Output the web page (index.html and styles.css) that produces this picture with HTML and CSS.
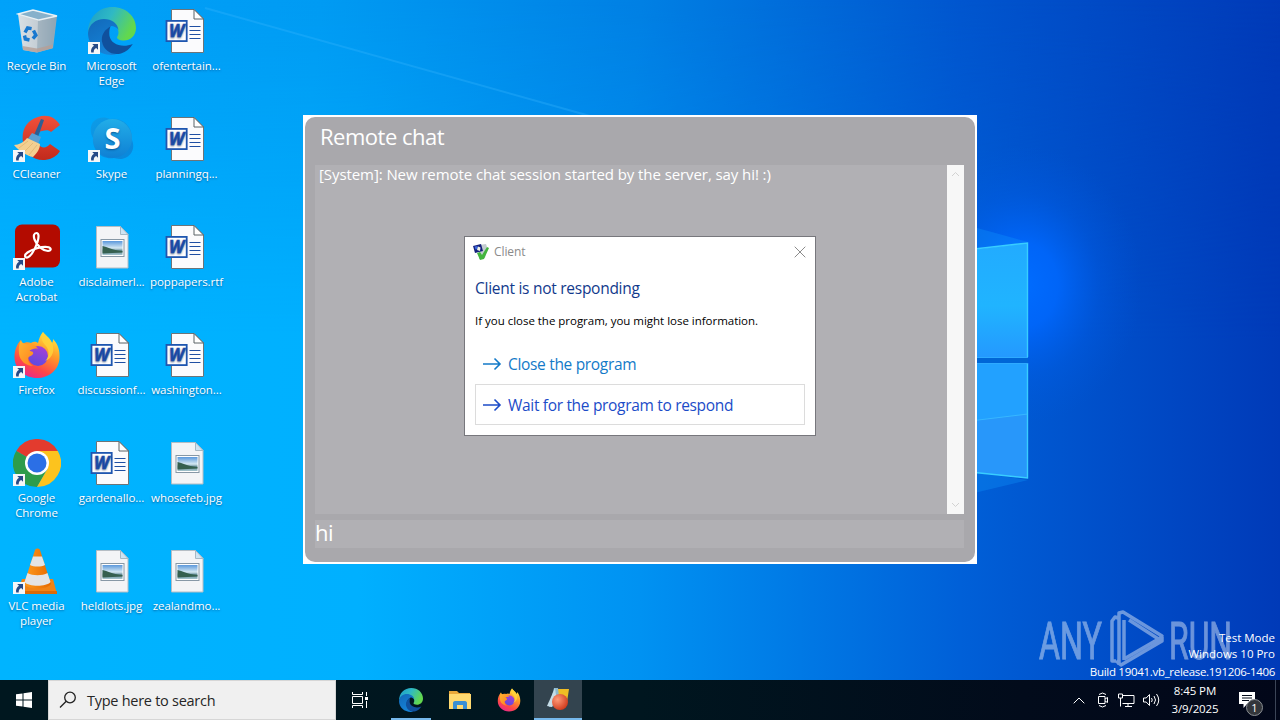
FILE: index.html
```html
<!DOCTYPE html>
<html lang="en">

<head>
    <meta charset="UTF-8" />
    <meta name="viewport" content="width=device-width, initial-scale=1.0" />
    <title>Desktop</title>
    <link rel="stylesheet" href="styles.css">
</head>

<body>
    <!-- Shared icons -->
    <svg class="sprite" aria-hidden="true">
        <defs>
            <linearGradient id="gEdgeTop" x1="0" y1="0" x2="1" y2="0.4">
                <stop offset="0" stop-color="#1b9bc9" />
                <stop offset="0.5" stop-color="#2fb9c4" />
                <stop offset="1" stop-color="#62d84e" />
            </linearGradient>
            <linearGradient id="gEdgeLow" x1="0" y1="0" x2="0.5" y2="1">
                <stop offset="0" stop-color="#1268b8" />
                <stop offset="1" stop-color="#1583d8" />
            </linearGradient>
            <linearGradient id="gFox" x1="0.8" y1="0" x2="0.3" y2="1">
                <stop offset="0" stop-color="#fff044" />
                <stop offset="0.4" stop-color="#ff9a28" />
                <stop offset="0.75" stop-color="#ff4747" />
                <stop offset="1" stop-color="#e8288c" />
            </linearGradient>
            <linearGradient id="gFoxHead" x1="0" y1="0" x2="1" y2="1">
                <stop offset="0" stop-color="#ffb82e" />
                <stop offset="1" stop-color="#ff7a22" />
            </linearGradient>
            <linearGradient id="gGlobe" x1="0.7" y1="0" x2="0.3" y2="1">
                <stop offset="0" stop-color="#a73fd5" />
                <stop offset="1" stop-color="#5b4be0" />
            </linearGradient>
            <linearGradient id="gSkype" x1="0" y1="0" x2="0.5" y2="1">
                <stop offset="0" stop-color="#1298e0" />
                <stop offset="1" stop-color="#0f7ccf" />
            </linearGradient>
            <linearGradient id="gSkypeFront" x1="0" y1="0" x2="0" y2="1">
                <stop offset="0" stop-color="#22ade8" />
                <stop offset="1" stop-color="#0f80d4" />
            </linearGradient>
            <linearGradient id="gCc" x1="0" y1="0" x2="0" y2="1">
                <stop offset="0" stop-color="#f0503a" />
                <stop offset="1" stop-color="#c22a1c" />
            </linearGradient>
            <linearGradient id="gCone" x1="0" y1="0" x2="1" y2="0">
                <stop offset="0" stop-color="#ff9a1c" />
                <stop offset="1" stop-color="#e66a00" />
            </linearGradient>
            <linearGradient id="gBin" x1="0" y1="0" x2="1" y2="0">
                <stop offset="0" stop-color="#d9e0e5" />
                <stop offset="0.55" stop-color="#c3ccd3" />
                <stop offset="1" stop-color="#8fa6b6" />
            </linearGradient>
            <linearGradient id="gPhoto" x1="0" y1="0" x2="0" y2="1">
                <stop offset="0" stop-color="#5b98dc" />
                <stop offset="0.5" stop-color="#d4e8f2" />
                <stop offset="0.7" stop-color="#5d8794" />
                <stop offset="1" stop-color="#a6c6cf" />
            </linearGradient>
            <radialGradient id="gBall" cx="0.35" cy="0.35" r="0.7">
                <stop offset="0" stop-color="#ff9a78" />
                <stop offset="1" stop-color="#cf3a1c" />
            </radialGradient>
        </defs>

        <symbol id="shortcut" viewBox="0 0 12 12">
            <path d="M0 0h12v12H0z" fill="#f4f6f8" />
            <path d="M4.200 2H10v5.800L8.200 6C6.300 7 5.600 8.400 5.700 10.500H3.200C2.600 7.800 3.600 5.400 6 3.800z" fill="#274a86" />
        </symbol>

        <symbol id="bin" viewBox="0 0 48 48">
            <path d="M5 7l15-4 24 6-4 32-16 4.500L10 43z" fill="url(#gBin)" />
            <path d="M25 13l18.500-4-4 32-15.500 4z" fill="#8da4b2" opacity=".6" />
            <path d="M5 7l15-4 24 6-18 4z" fill="#86b1cb" stroke="#e9f1f5" stroke-width="1.300" />
            <path d="M9.500 39l14.500 2.500 16-4-.5 4L24 45.500 10 43z" fill="#b59f96" opacity=".8" />
            <g fill="none" stroke="#1878cf" stroke-width="3.400">
                <path d="M12 25.500l2.600-4.500 4 .7" />
                <path d="M20.500 23.500l2.400 4.700-3 3.500" />
                <path d="M16.500 33l-4.200-1-.8-3.500" />
            </g>
        </symbol>

        <symbol id="edge" viewBox="0 0 48 48">
            <path d="M0 26C0 10 11 0 24.500 0 38 0 48 9.500 48 21c0 8-6 12.500-12 12.500-4.500 0-7-1.500-7-3 0-1 1.500-2 1.500-5C30.500 19 24 14 16 14 8 14 2 19 0 26z" fill="url(#gEdgeTop)" />
            <path d="M0 26c1-9 8-14 16-14 7.500 0 14 4.500 14.500 11-2-3-5-4-7-4-5 2-8 7-8 13 0 8 6 14 13 15.500C13 50 0 40 0 26z" fill="url(#gEdgeLow)" />
            <path d="M22.500 19.500c-6 3-9.500 9-8.500 15 1.500 9 10 14.500 19 12 5-1.500 9-5 11.800-9.500-11 4.500-22 0-23.300-8-.5-4 0-7.500 1-9.500z" fill="#10509d" />
        </symbol>

        <symbol id="ccleaner" viewBox="0 0 48 48">
            <path d="M47 10C42 2 34-1 25 2 14 5 8 15 10 27c2 12 11 19 22 18 7-1 12-4 15-9l-10-7c-4 5-9 4-12 0-3-6-1-12 4-13 4-1 7-1 9 1z" fill="url(#gCc)" />
            <path d="M28 4l3 1-6 17-4-2z" fill="#2c5f94" />
            <path d="M19 18l9 4-3 7-11-4z" fill="#5a9fd2" />
            <path d="M14 23l13 6c0 5-3 9-7 13-6-1-14-6-19-12 5 0 10-3 13-7z" fill="#f3cf91" />
            <path d="M6 33l9-7M11 37l9-9M16 40l8-10" stroke="#e5bb76" />
        </symbol>

        <symbol id="skype" viewBox="0 0 48 48">
            <path d="M5 7C10 1 18 2 22 4c13-2 23 8 22 21 4 9-2 19-12 19-3 0-5-1-6-1C13 45 4 35 5 23 2 18 2 11 5 7z" fill="url(#gSkype)" opacity=".7" />
            <circle cx="24.500" cy="23.500" r="19.500" fill="url(#gSkypeFront)" />
            <text x="24.500" y="34" class="skype-letter">S</text>
        </symbol>

        <symbol id="acrobat" viewBox="0 0 48 48">
            <rect x="2" y="1.500" width="45" height="43" rx="7" fill="#b30b00" />
            <path d="M23.500 10c2.500 0 2.500 4 1 9-2.500 7-6.500 14-10 15.500-3 .5-3.500-2.500 0-5 5-3.500 14-6 19.500-5.500 5 .5 4.500 4 1 4-5 0-11-5-13.500-11.500-1.300-4-.5-6.500 2-6.500z" fill="none" stroke="#fff" stroke-width="2.200" />
        </symbol>

        <symbol id="firefox" viewBox="0 0 48 48">
            <path d="M30 1c2 3 7 6 9 11 1-1 1-3 1-4 5 5 7 12 6.500 19C46 39 36 47 24 47S1.500 38 1.500 26C1.500 19 4 13 8 9c0 2 .5 3 1 4 3-2 7-2 9-1 4-2 5-1 7 0 1-4 2-8 5-11z" fill="url(#gFox)" />
            <circle cx="25" cy="25" r="10" fill="url(#gGlobe)" />
            <path d="M8 9c1 4 5 5 10 4 3 1 5 2 7 5-3-1-6 0-9 2 3 0 5 1 4 3-1 2-4 2-5 4 0 4 2 6 5 8-7 0-13-5-14-12-.5-6 0-10 2-14z" fill="url(#gFoxHead)" />
            <path d="M30 1c-3 5-1 10 3 14 4 5 3 12-1 15 8-3 10-11 7-18-2-5-7-8-9-11z" fill="#ffd23a" opacity=".85" />
        </symbol>

        <symbol id="chrome" viewBox="0 0 48 48">
            <path d="M24 24L3.200 12A24 24 0 0 1 44.800 12z" fill="#e33b2e" />
            <path d="M24 24L3.200 12A24 24 0 0 0 24 48l10.400-18z" fill="#2d9c4b" />
            <path d="M24 12h20.800A24 24 0 0 1 24 48l10.400-18z" fill="#fcc31e" />
            <circle cx="24" cy="24" r="12" fill="#fff" />
            <circle cx="24" cy="24" r="9.500" fill="#2b6fe6" />
        </symbol>

        <symbol id="vlc" viewBox="0 0 48 48">
            <path d="M9 32h31l4 15H4z" fill="#f08316" />
            <path d="M4 44h40v3H4z" fill="#d96a08" />
            <path d="M22 3c1-2 4-2 5 0l11 34c-4 6-23 6-27 0z" fill="url(#gCone)" />
            <path d="M20 9.500h9l3 8.500c-4 2-11 2-15 0z" fill="#e4e4e4" />
            <path d="M14.500 26c5 3 15 3 20 0l3 9c-4 5-22 5-26 0z" fill="#e4e4e4" />
        </symbol>

        <symbol id="word" viewBox="0 0 48 48">
            <path d="M8.500 2.500h22.500L40.500 12v33.500h-32z" fill="#fbfbfd" stroke="#6d7478" />
            <path d="M31 2.500V12h9.500z" fill="#fff" stroke="#5b6266" />
            <path d="M26.500 19.500h11M26.500 23.500h11M26.500 27.500h11M26.500 31.500h11" stroke="#1f4fa3" />
            <rect x="3.500" y="13.900" width="20.200" height="20.200" fill="#fff" stroke="#1e56b0" stroke-width="1.800" />
            <text x="13.500" y="30" class="word-letter">W</text>
        </symbol>

        <symbol id="photo" viewBox="0 0 48 48">
            <path d="M8.500 3.500h24l7.500 8v33.500h-31.500z" fill="#f3f4f6" stroke="#b5bdc4" />
            <path d="M32.500 3.500v8H40z" fill="#cfe4f2" stroke="#a6b8c4" />
            <rect x="13" y="16.500" width="23" height="17" fill="#fff" stroke="#8798a6" />
            <rect x="14.500" y="18" width="20" height="14" fill="url(#gPhoto)" />
            <path d="M14.500 23c5 1 9 4 20 5v1.500l-20 1z" fill="#35604f" />
        </symbol>

        <symbol id="arrow" viewBox="0 0 20 14">
            <path d="M1 7h17M12.500 1.500L18 7l-5.500 5.500" fill="none" stroke="currentColor" stroke-width="1.600" />
        </symbol>
    </svg>

    <div class="desktop">
        <!-- Wallpaper -->
        <svg class="wallpaper" viewBox="0 0 1280 680" aria-hidden="true">
            <defs>
                <linearGradient id="sky" x1="0" y1="0" x2="1" y2="0.050">
                    <stop offset="0" stop-color="#00a2fa" />
                    <stop offset="0.25" stop-color="#009bf3" />
                    <stop offset="0.5" stop-color="#0080e4" />
                    <stop offset="0.75" stop-color="#0056cf" />
                    <stop offset="1" stop-color="#003ab8" />
                </linearGradient>
                <linearGradient id="floor" x1="0" y1="0" x2="1" y2="0">
                    <stop offset="0" stop-color="#00b4ff" />
                    <stop offset="0.28" stop-color="#00b0ff" />
                    <stop offset="0.5" stop-color="#0092f2" />
                    <stop offset="0.75" stop-color="#0060d8" />
                    <stop offset="1" stop-color="#003ab8" />
                </linearGradient>
                <linearGradient id="fade" x1="0" y1="0" x2="0" y2="1">
                    <stop offset="0" stop-color="#000" />
                    <stop offset="0.5" stop-color="#fff" />
                </linearGradient>
                <mask id="fadeMask">
                    <rect width="1280" height="680" fill="url(#fade)" />
                </mask>
                <radialGradient id="glow">
                    <stop offset="0" stop-color="#006cff" />
                    <stop offset="0.3" stop-color="#0068ff" stop-opacity=".85" />
                    <stop offset="0.65" stop-color="#0060f0" stop-opacity=".3" />
                    <stop offset="1" stop-color="#005ae0" stop-opacity="0" />
                </radialGradient>
                <linearGradient id="paneTop" x1="0" y1="0" x2="0" y2="1">
                    <stop offset="0" stop-color="#22abff" />
                    <stop offset="0.55" stop-color="#20b4ff" />
                    <stop offset="1" stop-color="#2499ff" />
                </linearGradient>
            </defs>
            <rect width="1280" height="680" fill="url(#sky)" />
            <rect width="1280" height="680" fill="url(#floor)" mask="url(#fadeMask)" />
            <ellipse cx="1022" cy="285" rx="120" ry="140" fill="url(#glow)" />
            <path d="M205 8L590 116" stroke="#3cb8ff" stroke-width="2" opacity=".3" />
            <path d="M970 226l58 16-58 8zM970 494l58-14-58-8z" fill="#109bff" opacity=".3" />
            <path d="M970 250l58-7v114h-58z" fill="url(#paneTop)" />
            <path d="M970 363h58v115l-58-6z" fill="#22a1ff" />
            <path d="M970 421l58-7v64l-58-6z" fill="#2897fa" />
            <path d="M970 421l58-7" stroke="#37b7ff" />
            <path d="M970 249.500l57.500-6.500v114M1027.500 363v115l-57.500-6" fill="none" stroke="#38ceff" stroke-width="1.400" />
            <path d="M970 357.500h58M970 363.500h58" stroke="#2eaaff" />
            <path d="M970 360.500h58" stroke="#0066d6" stroke-width="5" />
        </svg>

        <!-- Desktop icons -->
        <div class="icons">
            <div class="item"><svg class="icon"><use href="#bin" /></svg><span>Recycle Bin</span></div>
            <div class="item"><svg class="icon"><use href="#ccleaner" /></svg><svg class="link"><use href="#shortcut" /></svg><span>CCleaner</span></div>
            <div class="item"><svg class="icon"><use href="#acrobat" /></svg><svg class="link"><use href="#shortcut" /></svg><span>Adobe<br />Acrobat</span></div>
            <div class="item"><svg class="icon"><use href="#firefox" /></svg><svg class="link"><use href="#shortcut" /></svg><span>Firefox</span></div>
            <div class="item"><svg class="icon"><use href="#chrome" /></svg><svg class="link"><use href="#shortcut" /></svg><span>Google<br />Chrome</span></div>
            <div class="item"><svg class="icon"><use href="#vlc" /></svg><svg class="link"><use href="#shortcut" /></svg><span>VLC media<br />player</span></div>

            <div class="item"><svg class="icon"><use href="#edge" /></svg><svg class="link"><use href="#shortcut" /></svg><span>Microsoft<br />Edge</span></div>
            <div class="item"><svg class="icon"><use href="#skype" /></svg><svg class="link"><use href="#shortcut" /></svg><span>Skype</span></div>
            <div class="item"><svg class="icon"><use href="#photo" /></svg><span>disclaimerl...</span></div>
            <div class="item"><svg class="icon"><use href="#word" /></svg><span>discussionf...</span></div>
            <div class="item"><svg class="icon"><use href="#word" /></svg><span>gardenallo...</span></div>
            <div class="item"><svg class="icon"><use href="#photo" /></svg><span>heldlots.jpg</span></div>

            <div class="item"><svg class="icon"><use href="#word" /></svg><span>ofentertain...</span></div>
            <div class="item"><svg class="icon"><use href="#word" /></svg><span>planningq...</span></div>
            <div class="item"><svg class="icon"><use href="#word" /></svg><span>poppapers.rtf</span></div>
            <div class="item"><svg class="icon"><use href="#word" /></svg><span>washington...</span></div>
            <div class="item"><svg class="icon"><use href="#photo" /></svg><span>whosefeb.jpg</span></div>
            <div class="item"><svg class="icon"><use href="#photo" /></svg><span>zealandmo...</span></div>
        </div>

        <!-- Watermark -->
        <svg class="watermark" viewBox="0 0 200 64">
            <text x="3" y="52" textLength="63" lengthAdjust="spacingAndGlyphs">ANY</text>
            <text x="133" y="52" textLength="63" lengthAdjust="spacingAndGlyphs">RUN</text>
            <g class="play">
                <path d="M80 54h-4V14l3-4 3 1M83 58V6l4-1 39 24-2 4-31-20M88 13v40M88 52l38-22M80 54l5 4 41-24v-4" />
            </g>
        </svg>
        <div class="build">
            <div>Test Mode</div>
            <div>Windows 10 Pro</div>
            <div class="build-number">Build 19041.vb_release.191206-1406</div>
        </div>

        <!-- Chat window -->
        <div class="chat">
            <div class="chat-body">
                <div class="chat-title"><span>Remote chat</span></div>
                <div class="chat-log">
                    <div class="messages"><span>[System]: New remote chat session started by the server, say hi! :)</span></div>
                    <div class="scrollbar">
                        <svg width="9" height="6" viewBox="0 0 9 6"><path d="M1 5l3.500-3.500L8 5" /></svg>
                        <svg width="9" height="6" viewBox="0 0 9 6"><path d="M1 1l3.500 3.500L8 1" /></svg>
                    </div>
                </div>
                <div class="chat-input"><span>hi</span></div>
            </div>
        </div>

        <!-- Not responding dialog -->
        <div class="dialog">
            <div class="dialog-bar">
                <svg width="16" height="16" viewBox="0 0 16 16">
                    <path d="M6 1l7-1 1 3-2 11-6 1z" fill="#c3ccd0" />
                    <path d="M0 2l8-2 2 7-8 2z" fill="#14207c" />
                    <path d="M1.500 2.500l3-.5.500 3-2.500.5z" fill="#3d68e0" />
                    <path d="M5 2.500l2.500 1L7 7 4 6z" fill="#f1f4e4" />
                    <path d="M4 9l3-1 2 3 5-8 2 1-5 11-4 1z" fill="#43b53e" />
                </svg>
                <span class="dialog-name">Client</span>
                <svg class="close" width="12" height="12" viewBox="0 0 12 12"><path d="M.7.7l10.600 10.600M11.300.7L.7 11.300" /></svg>
            </div>
            <div class="heading"><span>Client is not responding</span></div>
            <div class="note"><span>If you close the program, you might lose information.</span></div>
            <div class="choice"><svg><use href="#arrow" /></svg><span class="choice-close">Close the program</span></div>
            <div class="choice selected"><svg><use href="#arrow" /></svg><span class="choice-wait">Wait for the program to respond</span></div>
        </div>
    </div>

    <!-- Taskbar -->
    <div class="taskbar">
        <div class="start">
            <svg width="16" height="16" viewBox="0 0 16 16"><path d="M0 2.300L6.500 1.400v6.100H0zM7.500 1.200L16 0v7.500H7.500zM0 8.500h6.500v6.100L0 13.700zM7.500 8.500H16V16l-8.500-1.200z" fill="#fff" /></svg>
        </div>
        <div class="search">
            <svg width="18" height="18" viewBox="0 0 18 18"><circle cx="11" cy="6.500" r="5.300" /><path d="M7.200 10.300L1 16.500" /></svg>
            <span>Type here to search</span>
        </div>
        <div class="task view">
            <svg width="17" height="16" viewBox="0 0 17 16"><path d="M.5 0v2.500h10V0M.5 16v-2.500h10V16M.5 4.500h10v7H.5zM14.500 0v4M14.500 9v7" fill="none" stroke="#fff" /><path d="M13 5h3v3h-3z" fill="#fff" /></svg>
        </div>
        <div class="task open"><svg class="app"><use href="#edge" /></svg></div>
        <div class="task">
            <svg width="22" height="18" viewBox="0 0 22 18">
                <path d="M0 0h8l2 2h11v15H0z" fill="#e9a83a" />
                <path d="M0 3h22v15H0z" fill="#ffd970" />
                <path d="M4 18v-6c0-1 .7-2 2-2h10c1.300 0 2 1 2 2v6h-4v-4H8v4z" fill="#3a8fd4" />
            </svg>
        </div>
        <div class="task"><svg class="app"><use href="#firefox" /></svg></div>
        <div class="task active">
            <svg width="24" height="24" viewBox="0 0 24 24">
                <path d="M11 2h12l-2 13H11z" fill="#f0bd24" />
                <path d="M8 1h4l2 17-11 2z" fill="#8cb9cf" />
                <path d="M9 1L1 19l5 1 4-12z" fill="#c5dde8" />
                <circle cx="14" cy="15" r="8" fill="url(#gBall)" />
            </svg>
        </div>
        <div class="tray">
            <svg width="12" height="7" viewBox="0 0 12 7"><path d="M.7 6.300L6 1l5.300 5.300" /></svg>
            <svg width="12" height="16" viewBox="0 0 12 16"><path d="M1.500 4.500h6.500v7H1.500zM8 7l2.500-1.500v5L8 9M2 2.500Q5.500-.5 9 2.500M2 13.500Q5.500 16.500 9 13.500" /></svg>
            <svg width="17" height="14" viewBox="0 0 17 14"><path d="M5 2.500h11v8H4.500M10 10.500v3M7 13.500h7M.5 1h4v4h-4zM2.500 5v8.500" /></svg>
            <svg width="17" height="14" viewBox="0 0 17 14"><path d="M.5 5h2.700l3.300-3.500v11L3.200 9H.5zM8.500 5q1.500 2 0 4M11 3q3 4 0 8M13.500 1q4.500 6 0 12" /></svg>
        </div>
        <div class="clock"><span>8:45 PM</span><span class="date">3/9/2025</span></div>
        <div class="notice">
            <svg width="16" height="16" viewBox="0 0 16 16"><path d="M0 0h16v12H8l-3.500 4v-4H0z" fill="#fff" /><path d="M3 3.500h10M3 6h10M3 8.500h7" stroke="#020a18" /></svg>
            <span class="badge">1</span>
        </div>
    </div>
</body>

</html>
```

FILE: styles.css
```css
:root {
    --ui-font: "Open Sans", "Noto Sans", sans-serif;
    --chat-bg: #a9a8ac;
    --log-bg: #b1b0b4;
}

* {
    box-sizing: border-box;
}

body {
    margin: 0;
    width: 1280px;
    height: 720px;
    overflow: hidden;
    display: flex;
    flex-direction: column;
    font-family: var(--ui-font);
}

svg {
    display: block;
    flex: none;
}

span {
    white-space: nowrap;
}

.sprite {
    position: absolute;
    width: 0;
    height: 0;
}

.desktop {
    position: relative;
    height: 680px;
}

.wallpaper {
    position: absolute;
    width: 1280px;
    height: 680px;
}

/* Desktop icons */
.icons {
    position: relative;
    display: grid;
    width: max-content;
    margin-left: -1px;
    grid-auto-flow: column;
    grid-template-rows: repeat(6, 108px);
    grid-auto-columns: 75px;
}

.item {
    position: relative;
    display: flex;
    flex-direction: column;
    align-items: center;
    padding-top: 7px;
    color: #fff;
    font-size: 11.5px;
    letter-spacing: -0.05px;
    line-height: 15px;
    text-align: center;
    text-shadow: 0 1px 2px rgba(0, 30, 80, 0.5);
}

.icon {
    width: 48px;
    height: 48px;
    margin-bottom: 3px;
}

.link {
    position: absolute;
    left: 14px;
    top: 42px;
    width: 12px;
    height: 12px;
}

.word-letter {
    font: italic bold 17px "Open Sans", sans-serif;
    fill: #1e4fae;
    stroke: #1e4fae;
    stroke-width: 0.5px;
    text-anchor: middle;
}

.skype-letter {
    font: bold 29px "Open Sans", sans-serif;
    fill: #fff;
    text-anchor: middle;
}

/* Bottom right texts */
.watermark {
    position: absolute;
    left: 1036px;
    top: 607px;
    width: 200px;
    height: 64px;
    opacity: 0.5;
}

.watermark text {
    font: 52px Roboto, sans-serif;
    fill: #d5e2f5;
    stroke: #d5e2f5;
    stroke-width: 1px;
}

.play {
    fill: none;
    stroke: #d5e2f5;
    stroke-width: 3.5px;
    stroke-linejoin: round;
}

.build {
    position: absolute;
    right: 5px;
    top: 630px;
    color: #fff;
    font-size: 11.5px;
    line-height: 16px;
    text-align: right;
}

.build-number {
    margin-top: 2px;
    letter-spacing: -0.3px;
}

/* Chat window */
.chat {
    position: absolute;
    left: 303px;
    top: 115px;
    width: 674px;
    height: 449px;
    padding: 2px;
    background: #fff;
    color: #fff;
}

.chat-body {
    display: flex;
    flex-direction: column;
    height: 445px;
    padding: 0 11px 14px 10px;
    background: var(--chat-bg);
    border-radius: 10px;
}

.chat-title {
    height: 48px;
    padding-left: 5px;
    font-size: 22px;
    letter-spacing: -0.5px;
    line-height: 38px;
}

.chat-log {
    display: flex;
    height: 349px;
    margin-bottom: 6px;
}

.messages {
    flex: 1;
    padding-left: 4px;
    background: var(--log-bg);
    font-size: 15px;
    letter-spacing: -0.08px;
    line-height: 18px;
}

.scrollbar {
    display: flex;
    flex-direction: column;
    justify-content: space-between;
    align-items: center;
    width: 17px;
    padding: 6px 0;
    background: #f7f7f7;
}

.scrollbar path {
    fill: none;
    stroke: #d2d2d2;
}

.chat-input {
    height: 28px;
    background: var(--log-bg);
    font-size: 22px;
    letter-spacing: -0.5px;
    line-height: 25px;
}

/* Dialog */
.dialog {
    position: absolute;
    left: 464px;
    top: 236px;
    width: 352px;
    height: 200px;
    padding: 0 10px;
    background: #fff;
    border: 1px solid #77777c;
}

.dialog-bar {
    display: flex;
    align-items: center;
    height: 29px;
    margin: 0 -1px 0 -2px;
    color: #8b8b8b;
    font-size: 12px;
    letter-spacing: -0.1px;
}

.dialog-name {
    margin-left: 5px;
}

.close {
    margin-left: auto;
}

.close path {
    fill: none;
    stroke: #8b8b8b;
}

.heading {
    height: 43px;
    color: #123a8c;
    font-size: 15.5px;
    letter-spacing: -0.27px;
    line-height: 45px;
}

.note {
    height: 34px;
    color: #000;
    font-size: 11.5px;
    letter-spacing: -0.02px;
    line-height: 24px;
}

.choice {
    display: flex;
    align-items: center;
    gap: 6px;
    height: 41px;
    padding-left: 6px;
    border: 1px solid transparent;
    color: #137ac8;
    font-size: 15.5px;
    letter-spacing: -0.32px;
}

.choice svg {
    width: 20px;
    height: 14px;
}

.selected {
    border-color: #dcdcdc;
    color: #1c4cc8;
}

/* Taskbar */
.taskbar {
    display: flex;
    height: 40px;
    background: linear-gradient(90deg, #00171f 0%, #00161f 50%, #020b1b 80%, #020719 100%);
    color: #fff;
}

.start {
    display: flex;
    align-items: center;
    justify-content: center;
    width: 48px;
}

.search {
    display: flex;
    align-items: center;
    gap: 10px;
    width: 288px;
    padding-left: 10px;
    background: #f0f0f0;
    border: 1px solid #d6d6d6;
    color: #262626;
    font-size: 14.5px;
    letter-spacing: -0.27px;
}

.search svg {
    fill: none;
    stroke: #222;
    stroke-width: 1.3px;
}

.task {
    display: flex;
    align-items: center;
    justify-content: center;
    width: 48px;
    margin-right: 1px;
}

.view {
    margin-right: 3px;
}

.app {
    width: 24px;
    height: 24px;
}

.open {
    background: linear-gradient(#76b9ed, #76b9ed) center bottom / 40px 2px no-repeat;
}

.active {
    background: #33444f;
    border-bottom: 2px solid #76b9ed;
}

.tray {
    display: flex;
    align-items: center;
    gap: 9px;
    margin-left: auto;
}

.tray svg {
    fill: none;
    stroke: #fff;
}

.tray svg:first-child {
    margin-right: 3px;
}

.tray svg:last-child {
    margin-left: -1px;
}

.clock {
    display: flex;
    flex-direction: column;
    align-items: center;
    width: 70px;
    padding-top: 2px;
    font-size: 11.5px;
    letter-spacing: -0.1px;
    line-height: 18px;
}

.notice {
    position: relative;
    display: flex;
    width: 46px;
    padding: 12px 0 0 9px;
    border-right: 1px solid #3c4557;
    margin-right: 4px;
}

.badge {
    position: absolute;
    left: 16px;
    top: 19px;
    width: 17px;
    height: 17px;
    border: 1px solid #8b8f94;
    border-radius: 50%;
    background: #33363b;
    font-size: 11px;
    line-height: 15px;
    text-align: center;
}
```
